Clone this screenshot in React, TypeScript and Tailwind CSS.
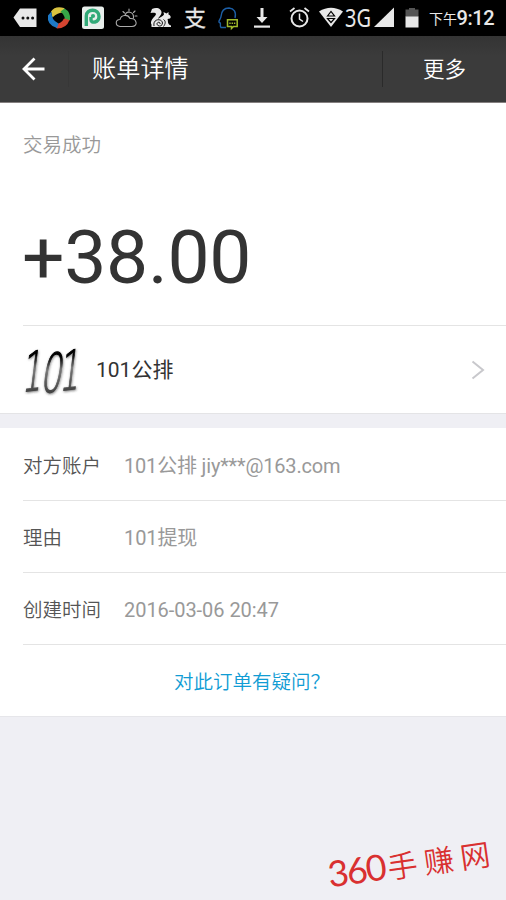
import React from "react";

const cjk = "font-['Roboto','Noto_Sans_CJK_SC',sans-serif]";

function StatusBar() {
  return (
    <div className="flex h-9 w-full items-center bg-black text-[#e8e8e8]">
      {/* notification icons */}
      <svg className="h-9 w-[280px] shrink-0" viewBox="0 0 280 36" fill="none">
        <path d="M20 8.500H36.500V27H20L13.500 17.500Z" fill="#e8e8e8" />
        <circle cx="23" cy="18" r="1.500" fill="#111" />
        <circle cx="27.800" cy="18" r="1.500" fill="#111" />
        <circle cx="32.600" cy="18" r="1.500" fill="#111" />

        <path d="M51 11.500Q55 5.500 64 8L67.500 13Q59 11 52.500 17.500Z" fill="#d9c340" />
        <path d="M64.500 8.500Q71 12 70 20L64.500 22.500Q66 16 60.500 11.500Z" fill="#37a447" />
        <path d="M69.500 20Q66.500 28.500 57 28.500L53.500 24.500Q61.500 24 64 18.500Z" fill="#d44430" />
        <path d="M57 28Q46.500 25 48 15.500L51.500 11.500Q51 20 58.500 23.500Z" fill="#1e79c6" />

        <rect x="82" y="6.500" width="22" height="22.500" rx="2.500" fill="#e8eeeb" />
        <path d="M86.300 26V16C86.300 8.200 99 8.200 99 16.500C99 23 91 23.500 91 20V17" stroke="#31aa78" strokeWidth="3.400" />
        <circle cx="93" cy="16" r="2.100" fill="#31aa78" />

        <g stroke="#aaa" strokeWidth="1.100" strokeLinecap="round">
          <path d="M120 26.500C115 26 115 19.500 120 19.500C121 14.500 128 14 130 18.500C137 18 138.500 26.500 132 26.500Z" />
          <path d="M125 15.500C126 10.500 134 11 133.500 18" />
          <path d="M129 9V11M123 11.500L124.500 13M135 11L133.500 12.500M137 16H135" />
        </g>

        <path d="M150.500 13L152 9C157 6.500 162 9 161.500 13C161 16 158.500 16.500 158 19C160 16.800 163 16.500 164 14.500L163.500 12L166.500 13.500L168.500 12V14.500C170.500 15.500 171.500 17 170 18.500L167.500 19C168.500 22 167 24 171 25.500V27H151.500V24.500C150 22 152 19 155 16C157 13.500 156 12 150.500 13Z" fill="#e8e8e8" />
        <path d="M154 26C152.500 18.500 162 18 162.500 23C162.500 27 157 27 157 23.500C158 21.500 160.500 22 160 24M163.500 19.500C166 21 165.500 24 163.500 26.500" stroke="#000" strokeWidth="0.900" />

        <text x="184" y="26" fontSize="22" fill="#e8e8e8" stroke="#e8e8e8" strokeWidth="0.300" className="font-['Noto_Sans_CJK_SC',sans-serif]">支</text>

        <path d="M226 27.500H221C219 25 222 23.500 219.500 22.500C217.500 22 221 18.500 221 16.500C221.500 10 225 8 229 8C234 8.500 236.500 12 235 18" stroke="#1c5ea5" strokeWidth="1.400" />
        <path d="M227.500 19.800H237.200V26.500H233.500L231.500 28.500V26.500H227.500Z" stroke="#a1bb2c" strokeWidth="1.500" />
        <path d="M229.300 23.200H235.500" stroke="#a1bb2c" strokeWidth="1.500" strokeDasharray="1.400 0.900" />

        <path d="M260.500 8H263.500V17H267.500L262 23L256.500 17H260.500Z" fill="#e8e8e8" />
        <rect x="254" y="25.500" width="16" height="2.200" fill="#e8e8e8" />
      </svg>
      {/* system icons */}
      <svg className="h-9 w-[65px] shrink-0" viewBox="280 0 65 36" fill="none">
        <circle cx="299.500" cy="18.500" r="8" stroke="#e8e8e8" strokeWidth="2" />
        <path d="M299.500 13.500V19L303 21.500" stroke="#e8e8e8" strokeWidth="1.500" />
        <path d="M290 11.500L294.500 8M309 11.500L304.500 8" stroke="#e8e8e8" strokeWidth="1.700" />
        <path d="M319 11.500Q331 4 343 11.500L331 27Z" fill="#e8e8e8" />
        <path d="M327.500 16L331 11.500L334.500 16ZM327.500 18.500H334.500L331 22.500Z" stroke="#000" strokeWidth="1.200" />
      </svg>
      <svg className="h-9 w-[29px] shrink-0 overflow-visible" viewBox="345 0 29 36">
        <text x="345" y="27" textLength="26" lengthAdjust="spacingAndGlyphs" fontSize="25.500" fill="#e8e8e8" className="font-['Noto_Sans',sans-serif]">3G</text>
      </svg>
      <svg className="h-9 w-[54px] shrink-0" viewBox="374 0 54 36">
        <path d="M374 27L394 7.500V27Z" fill="#e8e8e8" />
        <path d="M405.500 9.500H409V8H415V9.500H418.500V17H405.500Z" fill="#555" />
        <rect x="405.500" y="16.500" width="13" height="11" fill="#e8e8e8" />
      </svg>
      <svg className="h-9 w-[78px] shrink-0" viewBox="428 0 78 36" fill="#e8e8e8">
        <text x="429" y="24" fontSize="14" className="font-['Noto_Sans_CJK_SC',sans-serif]">下午</text>
        <text x="456.500" y="24.500" fontSize="20" fontWeight="500" textLength="38" lengthAdjust="spacing" className="font-['Roboto',sans-serif]">9:12</text>
      </svg>
    </div>
  );
}

function Header() {
  return (
    <header className="flex h-[67px] items-center border-b border-[#858080] bg-linear-to-b from-[#343434] to-[#3b3b3b] to-30% text-white">
      <svg className="ml-[22px] h-6 w-6" viewBox="0 0 24 24" fill="none" stroke="#fff" strokeWidth="2.800">
        <path d="M22.500 12H2M12.500 1.500L2 12L12.500 22.500" />
      </svg>
      <div className="ml-[22px] h-[36px] w-px bg-[#373737]" />
      <h1 className="ml-[23px] text-[24.200px] leading-9 font-[350]">账单详情</h1>
      <div className="ml-auto h-[36px] w-px bg-[#2a2a2a]" />
      <span className="mt-[2px] mr-10 ml-10 text-[21.500px] leading-9 font-[350]">更多</span>
    </header>
  );
}

const rows = [
  { label: "对方账户", value: "101公排 jiy***@163.com", spacing: "tracking-[-0.180px]" },
  { label: "理由", value: "101提现", spacing: "tracking-[-0.100px]" },
  { label: "创建时间", value: "2016-03-06 20:47", spacing: "tracking-[-0.050px]" },
];

export default function App() {
  return (
    <div className={`relative h-[900px] w-[506px] overflow-hidden bg-[#efeff4] ${cjk}`}>
      <StatusBar />
      <Header />
      <section className="h-[311px] border-b border-[#e4e4e6] bg-white pl-[23px]">
        <div className="h-[223px] border-b border-[#e4e4e4]">
          <p className="pt-[28px] text-[19.500px] leading-[30px] font-[350] text-[#999]">交易成功</p>
          <p className="-ml-px mt-[52px] text-[75px] leading-[88px] tracking-[-0.300px] text-[#333]">+38.00</p>
        </div>
        <div className="flex h-[87px] items-center">
          <svg className="h-[54px] w-[60px] overflow-visible" viewBox="0 0 60 54">
            <defs>
              <linearGradient id="ink" x1="0" y1="0" x2="0" y2="1">
                <stop offset="0.250" stopColor="#000" />
                <stop offset="0.450" stopColor="#777" />
                <stop offset="0.800" stopColor="#444" />
              </linearGradient>
              <filter id="shadow" x="-20%" y="-20%" width="140%" height="140%">
                <feDropShadow dx="0.500" dy="1" stdDeviation="1" floodColor="#333" floodOpacity="0.600" />
              </filter>
            </defs>
            <g fontSize="54" fill="url(#ink)" stroke="url(#ink)" strokeWidth="1.200" filter="url(#shadow)" className="font-['DejaVu_Sans',sans-serif] font-extralight">
              <text transform="translate(-1.500 49) rotate(-7) skewX(-14) scale(0.580 1)">1</text>
              <text transform="translate(16.500 48.500) skewX(-10) scale(0.620 1)">0</text>
              <text transform="translate(36 48) rotate(-7) skewX(-14) scale(0.580 1)">1</text>
            </g>
          </svg>
          <span className="mt-[3px] ml-[13px] text-[21px] text-[#333]">101公排</span>
          <svg className="mr-[21px] ml-auto h-5 w-[14px]" viewBox="0 0 14 20" fill="none" stroke="#c8c8cc" strokeWidth="2">
            <path d="M1.500 1.500L12 10L1.500 18.500" />
          </svg>
        </div>
      </section>
      <section className="mt-[14px] h-[289px] border-b border-[#e6e6ea] bg-white pt-px">
        {rows.map(({ label, value, spacing }) => (
          <div key={label} className="ml-[23px] flex h-[72px] items-center border-b border-[#e4e4e4] pt-[3px] text-[20px]">
            <span className="w-[101px] pt-px text-[19.500px] font-[350] text-[#555]">{label}</span>
            <span className={`-mt-px text-[#999] ${spacing}`}>{value}</span>
          </div>
        ))}
        <p className="flex h-[71px] items-center justify-center pt-[4px] pr-[2px] text-[19.500px] font-[350] text-[#109cd4]">对此订单有疑问？</p>
      </section>
      <div className="absolute top-[840px] left-[327px] flex w-[166px] -rotate-[8deg] items-baseline whitespace-nowrap text-[#d93030]">
        <span className="font-['Lato',sans-serif] text-[36px] leading-[44px] tracking-[-1.800px]">360</span>
        <span className="ml-[3px] font-['Noto_Sans_CJK_SC',sans-serif] text-[30px] leading-[44px] font-[350] tracking-[6.500px]">手赚网</span>
      </div>
    </div>
  );
}
